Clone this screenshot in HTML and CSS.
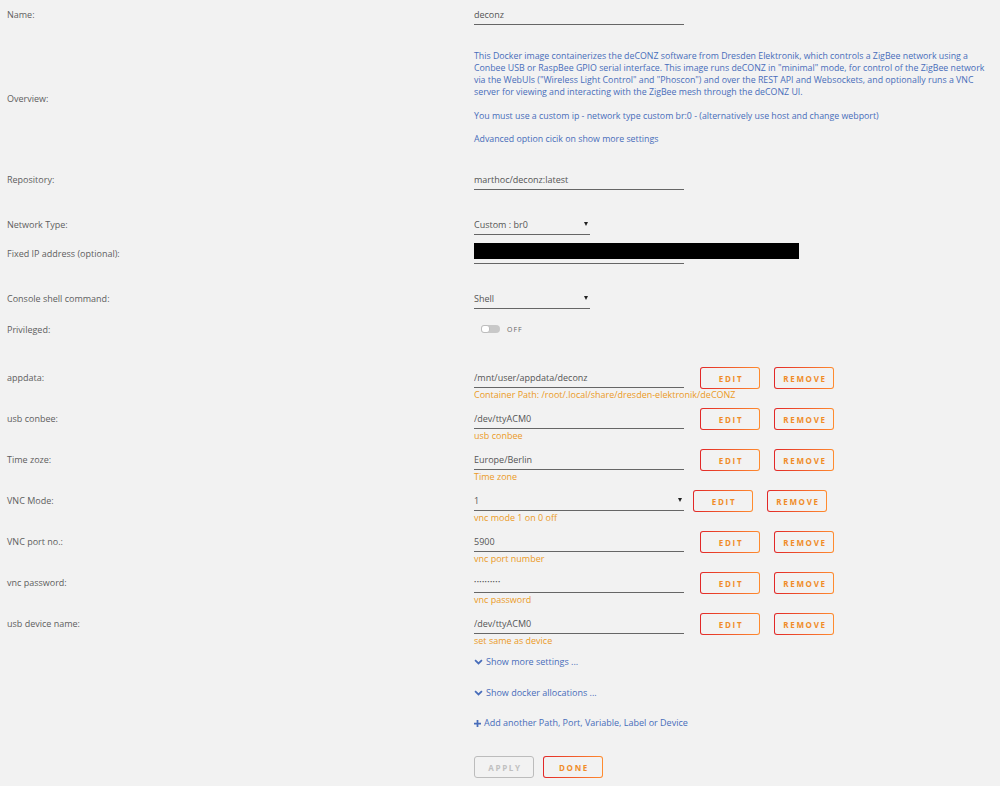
FILE: index.html
```html
<!DOCTYPE html>
<html lang="en">
<head>
    <meta charset="UTF-8">
    <meta name="viewport" content="width=device-width, initial-scale=1.0">
    <title>Update Container</title>
    <link rel="stylesheet" href="styles.css">
</head>
<body>
    <form class="template" id="templateForm">
        <div class="row first">
            <label>Name:</label>
            <div class="value"><input class="text" type="text" name="name" value="deconz"></div>
        </div>

        <div class="row about">
            <label>Overview:</label>
            <div class="value overview">
                This Docker image containerizes the deCONZ software from Dresden Elektronik, which controls a ZigBee network using a Conbee USB or RaspBee GPIO serial interface. This image runs deCONZ in "minimal" mode, for control of the ZigBee network via the WebUIs ("Wireless Light Control" and "Phoscon") and over the REST API and Websockets, and optionally runs a VNC server for viewing and interacting with the ZigBee mesh through the deCONZ UI.<br><br>
                You must use a custom ip - network type custom br:0 - (alternatively use host and change webport)<br><br>
                Advanced option cicik on show more settings
            </div>
        </div>

        <div class="row repo">
            <label>Repository:</label>
            <div class="value"><input class="text" type="text" name="repository" value="marthoc/deconz:latest"></div>
        </div>

        <div class="row">
            <label>Network Type:</label>
            <div class="value">
                <span class="select short">
                    <select name="network">
                        <option>Custom : br0</option>
                    </select>
                </span>
            </div>
        </div>

        <div class="row tight">
            <label>Fixed IP address (optional):</label>
            <div class="value">
                <input class="text" type="text" name="ip" value="">
                <span class="redacted"></span>
            </div>
        </div>

        <div class="row">
            <label>Console shell command:</label>
            <div class="value">
                <span class="select short">
                    <select name="shell">
                        <option>Shell</option>
                    </select>
                </span>
            </div>
        </div>

        <div class="row privileged">
            <label>Privileged:</label>
            <div class="value">
                <span class="switch"><span class="knob"></span></span>
                <span class="switch-label">OFF</span>
            </div>
        </div>

        <div class="row path start">
            <label>appdata:</label>
            <div class="value">
                <div class="field">
                    <input class="text" type="text" value="/mnt/user/appdata/deconz">
                    <div class="help">Container Path: /root/.local/share/dresden-elektronik/deCONZ</div>
                </div>
                <button type="button" class="btn">EDIT</button>
                <button type="button" class="btn">REMOVE</button>
            </div>
        </div>

        <div class="row path">
            <label>usb conbee:</label>
            <div class="value">
                <div class="field">
                    <input class="text" type="text" value="/dev/ttyACM0">
                    <div class="help">usb conbee</div>
                </div>
                <button type="button" class="btn">EDIT</button>
                <button type="button" class="btn">REMOVE</button>
            </div>
        </div>

        <div class="row path">
            <label>Time zoze:</label>
            <div class="value">
                <div class="field">
                    <input class="text" type="text" value="Europe/Berlin">
                    <div class="help">Time zone</div>
                </div>
                <button type="button" class="btn">EDIT</button>
                <button type="button" class="btn">REMOVE</button>
            </div>
        </div>

        <div class="row path">
            <label>VNC Mode:</label>
            <div class="value">
                <div class="field">
                    <span class="select wide">
                        <select name="vnc_mode">
                            <option>1</option>
                            <option>0</option>
                        </select>
                    </span>
                    <div class="help">vnc mode 1 on 0 off</div>
                </div>
                <button type="button" class="btn near">EDIT</button>
                <button type="button" class="btn">REMOVE</button>
            </div>
        </div>

        <div class="row path">
            <label>VNC port no.:</label>
            <div class="value">
                <div class="field">
                    <input class="text" type="text" value="5900">
                    <div class="help">vnc port number</div>
                </div>
                <button type="button" class="btn">EDIT</button>
                <button type="button" class="btn">REMOVE</button>
            </div>
        </div>

        <div class="row path">
            <label>vnc password:</label>
            <div class="value">
                <div class="field">
                    <input class="text" type="password" value="changeme12">
                    <div class="help">vnc password</div>
                </div>
                <button type="button" class="btn">EDIT</button>
                <button type="button" class="btn">REMOVE</button>
            </div>
        </div>

        <div class="row path">
            <label>usb device name:</label>
            <div class="value">
                <div class="field">
                    <input class="text" type="text" value="/dev/ttyACM0">
                    <div class="help">set same as device</div>
                </div>
                <button type="button" class="btn">EDIT</button>
                <button type="button" class="btn">REMOVE</button>
            </div>
        </div>

        <div class="links">
            <a class="toggle more" href="#">
                <svg class="chevron" viewBox="0 0 10 7" width="9" height="6"><path d="M1 1.2 L5 5.2 L9 1.2" fill="none" stroke="#486dba" stroke-width="2"/></svg>
                Show more settings ...
            </a>
            <a class="toggle alloc" href="#">
                <svg class="chevron" viewBox="0 0 10 7" width="9" height="6"><path d="M1 1.2 L5 5.2 L9 1.2" fill="none" stroke="#486dba" stroke-width="2"/></svg>
                Show docker allocations ...
            </a>
            <a class="toggle add" href="#">
                <svg class="plus" viewBox="0 0 8 8" width="7" height="7"><path d="M4 0 V8 M0 4 H8" fill="none" stroke="#486dba" stroke-width="2"/></svg>
                Add another Path, Port, Variable, Label or Device
            </a>
        </div>

        <div class="actions">
            <button type="button" class="btn apply" disabled>APPLY</button>
            <button type="button" class="btn done">DONE</button>
        </div>
    </form>
</body>
</html>
```

FILE: styles.css
```css
body {
    margin: 0;
    padding: 4px 0 0 7px;
    background-color: #f2f2f2;
    font-family: "Open Sans", "Liberation Sans", sans-serif;
    font-size: 9px;
    color: #5e5e5e;
}

.row {
    display: flex;
    align-items: center;
    margin-top: 24px;
}

.row.first {
    margin-top: 0;
}

.row.about {
    margin-top: 26px;
}

.row.repo {
    margin-top: 23px;
}

.row.tight {
    margin-top: 8px;
}

.row.privileged {
    margin-top: 10px;
    height: 20px;
}

.row.path {
    align-items: flex-start;
    margin-top: 8px;
}

.row.path.start {
    margin-top: 28px;
}

.row > label {
    width: 467px;
    flex: none;
    padding-top: 1px;
    line-height: 20px;
}

.value {
    position: relative;
    display: flex;
    align-items: center;
}

.row.path .value {
    align-items: flex-start;
}

.overview {
    display: block;
    width: 522px;
    font-size: 8.8px;
    line-height: 11.9px;
    color: #486dba;
}

input.text {
    width: 210px;
    height: 20px;
    padding: 0;
    border: none;
    border-bottom: 1px solid #666;
    background: transparent;
    font: inherit;
    color: #555;
    outline: none;
}

input[type="password"] {
    font-size: 6px;
    letter-spacing: 0.4px;
}

.redacted {
    position: absolute;
    left: 0;
    top: 0;
    width: 325px;
    height: 16px;
    background-color: #000;
}

.select {
    position: relative;
    display: inline-block;
}

.select.short {
    width: 116px;
}

.select.wide {
    width: 210px;
}

.select select {
    display: block;
    width: 100%;
    height: 21px;
    padding: 0;
    border: none;
    border-bottom: 1px solid #666;
    border-radius: 0;
    background: transparent;
    font: inherit;
    color: #555;
    appearance: none;
    -webkit-appearance: none;
    outline: none;
}

.select::after {
    content: "";
    position: absolute;
    right: 2px;
    top: 8px;
    border-left: 2px solid transparent;
    border-right: 2px solid transparent;
    border-top: 4px solid #222;
    pointer-events: none;
}

.switch {
    position: relative;
    display: inline-block;
    width: 19px;
    height: 8px;
    margin-left: 7px;
    border-radius: 4px;
    background-color: #c8c8c8;
}

.knob {
    position: absolute;
    left: 0;
    top: 0;
    width: 7px;
    height: 6px;
    border: 1px solid #bdbdbd;
    border-radius: 3px;
    background-color: #fff;
}

.switch-label {
    margin-left: 7px;
    font-size: 7px;
    letter-spacing: 1px;
    color: #666;
}

.field {
    width: 210px;
    flex: none;
}

.help {
    white-space: nowrap;
    color: #eb9a26;
}

.row.path .help {
    height: 12px;
    line-height: 14px;
}

.btn {
    width: 60px;
    height: 22px;
    margin-left: 14px;
    padding: 0 0 0 2px;
    border: 1px solid transparent;
    border-radius: 3px;
    background: linear-gradient(#f2f2f2, #f2f2f2) padding-box,
                linear-gradient(90deg, #e22828, #ff8c2f) border-box;
    font-family: "Open Sans", "Liberation Sans", sans-serif;
    font-size: 8px;
    font-weight: bold;
    letter-spacing: 1.7px;
    color: #f08c28;
    cursor: pointer;
}

.field + .btn {
    margin-left: 16px;
}

.field + .btn.near {
    margin-left: 9px;
}

.links {
    margin-left: 467px;
}

.toggle {
    display: flex;
    align-items: center;
    line-height: 14px;
    color: #486dba;
    text-decoration: none;
}

.toggle.more {
    margin-top: 9px;
}

.toggle.alloc {
    margin-top: 17px;
}

.toggle.add {
    margin-top: 16px;
}

.chevron {
    margin-right: 3px;
}

.plus {
    margin-right: 3px;
}

.actions {
    display: flex;
    margin: 26px 0 0 467px;
}

.actions .btn {
    margin-left: 0;
    margin-right: 9px;
}

.btn.apply {
    background: transparent;
    border-color: #bcbcbc;
    color: #c0c0c0;
    cursor: default;
}
```
